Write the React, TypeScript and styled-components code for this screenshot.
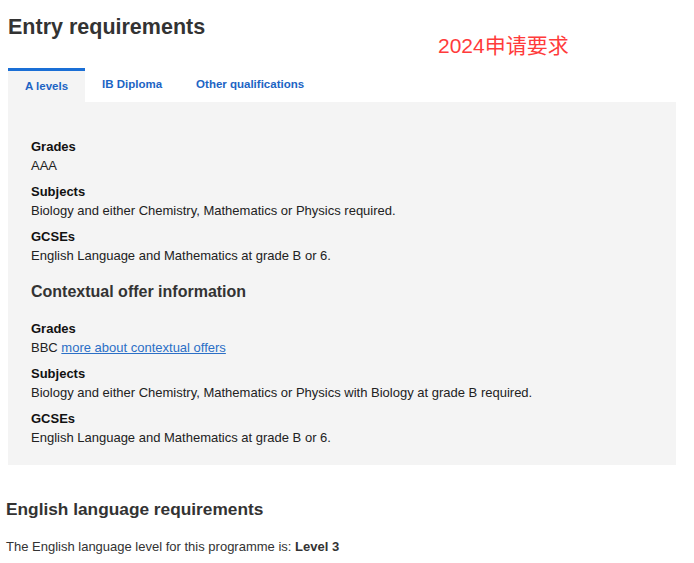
import styled, { createGlobalStyle } from 'styled-components';

const GlobalStyle = createGlobalStyle`
  html, body {
    margin: 0;
    padding: 0;
    background: #fff;
  }
  body {
    font-family: "Liberation Sans", Arial, "Noto Sans CJK SC", sans-serif;
    color: #222;
  }
`;

const Page = styled.div`
  padding: 12px 18px 0 8px;
`;

const Header = styled.header`
  display: grid;
  grid-template-columns: 430px 1fr;
  align-items: start;
`;

const Title = styled.h1`
  margin: 2px 0 0;
  font-size: 21.5px;
  line-height: 26px;
  font-weight: 700;
  color: #333;
`;

const Note = styled.span`
  margin-top: 21px;
  font-family: "Liberation Sans", "Noto Sans CJK SC", sans-serif;
  font-size: 21px;
  line-height: 26px;
  color: #ff3b3b;
`;

const TabList = styled.nav`
  display: flex;
  margin-top: 9px;
`;

const Tab = styled.a<{ $active?: boolean }>`
  box-sizing: border-box;
  height: 34px;
  padding: ${({ $active }) => ($active ? '8px 17px 0' : '9px 17px 0')};
  border-top: ${({ $active }) => ($active ? '3px solid #1a6fd6' : 'none')};
  background: ${({ $active }) => ($active ? '#f4f4f4' : 'transparent')};
  font-size: 11.5px;
  line-height: 14px;
  font-weight: 700;
  color: #1c64c4;
  text-decoration: none;
  cursor: pointer;
`;

const Panel = styled.section`
  background: #f4f4f4;
  padding: 35px 23px 18px;
`;

const List = styled.dl`
  display: flex;
  flex-direction: column;
  gap: 7px;
  margin: 0;
`;

const Item = styled.div``;

const Label = styled.dt`
  font-size: 13px;
  line-height: 19px;
  font-weight: 700;
  color: #111;
`;

const Value = styled.dd`
  margin: 0;
  font-size: 13px;
  line-height: 19px;
  color: #222;
`;

const SubHeading = styled.h3`
  margin: 17px 0 17px;
  font-size: 16px;
  line-height: 20px;
  font-weight: 700;
  color: #333;
`;

const Link = styled.a`
  color: #2b6fc6;
  text-decoration: underline;
`;

const Section = styled.section`
  margin: 33px 0 0 -2px;
`;

const SectionHeading = styled.h2`
  margin: 0;
  font-size: 17.3px;
  line-height: 22px;
  font-weight: 700;
  color: #333;
`;

const Paragraph = styled.p`
  margin: 17px 0 0;
  font-size: 13px;
  line-height: 19px;
  color: #333;
`;

type Requirement = { label: string; value: React.ReactNode };

const standard: Requirement[] = [
  { label: 'Grades', value: 'AAA' },
  { label: 'Subjects', value: 'Biology and either Chemistry, Mathematics or Physics required.' },
  { label: 'GCSEs', value: 'English Language and Mathematics at grade B or 6.' },
];

const contextual: Requirement[] = [
  {
    label: 'Grades',
    value: (
      <>
        BBC <Link href="#">more about contextual offers</Link>
      </>
    ),
  },
  {
    label: 'Subjects',
    value: 'Biology and either Chemistry, Mathematics or Physics with Biology at grade B required.',
  },
  { label: 'GCSEs', value: 'English Language and Mathematics at grade B or 6.' },
];

function RequirementList({ items }: { items: Requirement[] }) {
  return (
    <List>
      {items.map((item) => (
        <Item key={item.label}>
          <Label>{item.label}</Label>
          <Value>{item.value}</Value>
        </Item>
      ))}
    </List>
  );
}

export default function App() {
  return (
    <>
      <GlobalStyle />
      <Page>
        <Header>
          <Title>Entry requirements</Title>
          <Note>2024申请要求</Note>
        </Header>
        <TabList>
          <Tab $active>A levels</Tab>
          <Tab>IB Diploma</Tab>
          <Tab>Other qualifications</Tab>
        </TabList>
        <Panel>
          <RequirementList items={standard} />
          <SubHeading>Contextual offer information</SubHeading>
          <RequirementList items={contextual} />
        </Panel>
        <Section>
          <SectionHeading>English language requirements</SectionHeading>
          <Paragraph>
            The English language level for this programme is: <strong>Level 3</strong>
          </Paragraph>
        </Section>
      </Page>
    </>
  );
}
